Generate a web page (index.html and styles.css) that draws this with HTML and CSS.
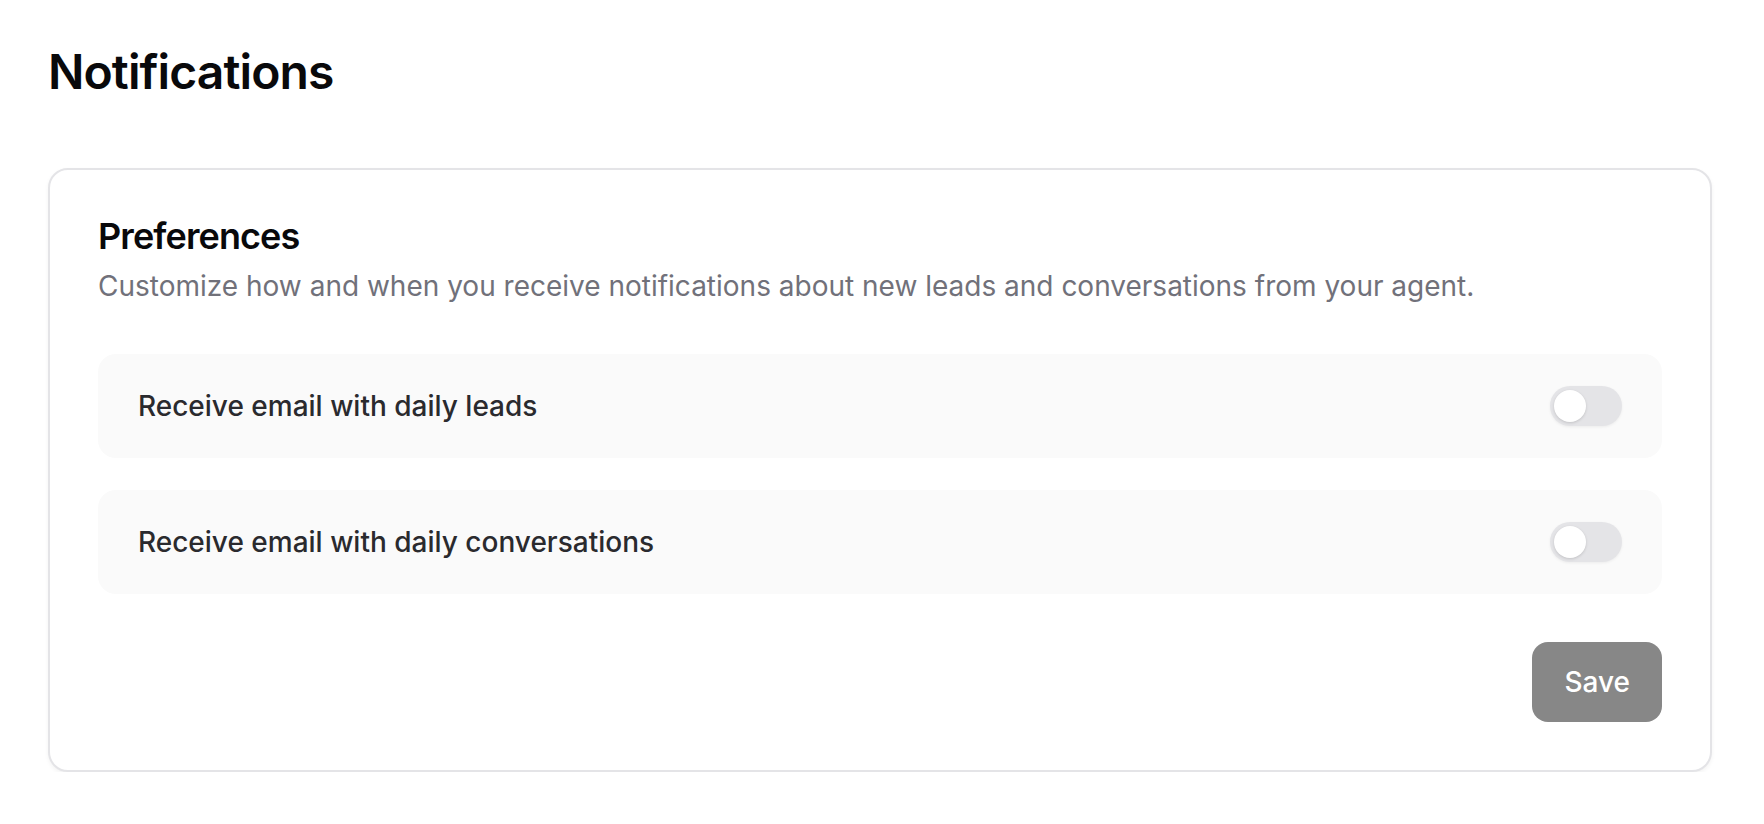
FILE: index.html
```html
<!DOCTYPE html>
<html lang="en">
<head>
<meta charset="utf-8">
<title>Notifications</title>
<link rel="stylesheet" href="styles.css">
</head>
<body>
<main class="page">
  <h1 class="title">Notifications</h1>
  <section class="card">
    <header class="card-header">
      <h2 class="card-title">Preferences</h2>
      <p class="card-desc">Customize how and when you receive notifications about new leads and conversations from your agent.</p>
    </header>
    <div class="list">
      <div class="row">
        <span class="label">Receive email with daily leads</span>
        <button class="switch" type="button" role="switch" aria-checked="false"><span class="thumb"></span></button>
      </div>
      <div class="row">
        <span class="label">Receive email with daily conversations</span>
        <button class="switch" type="button" role="switch" aria-checked="false"><span class="thumb"></span></button>
      </div>
    </div>
    <div class="actions">
      <button class="btn" type="button">Save</button>
    </div>
  </section>
</main>
</body>
</html>
```

FILE: styles.css
```css
* { box-sizing: border-box; }

html, body {
  margin: 0;
  background: #ffffff;
  font-family: Inter, "Noto Sans", "Liberation Sans", sans-serif;
  color: #09090b;
}

.page {
  padding: 40px 52px 0 48px;
}

.title {
  margin: 0 0 64px;
  font-size: 48px;
  line-height: 64px;
  font-weight: 600;
  letter-spacing: -0.9px;
  color: #09090b;
}

.card {
  border: 2px solid #e4e4e7;
  border-radius: 20px;
  padding: 48px;
  background: #ffffff;
  box-shadow: 0 2px 4px rgba(0, 0, 0, 0.05);
}

.card-header {
  display: flex;
  flex-direction: column;
  gap: 12px;
}

.card-title {
  margin: 0;
  font-size: 36px;
  line-height: 36px;
  font-weight: 600;
  letter-spacing: -0.9px;
  color: #09090b;
}

.card-desc {
  margin: 0;
  font-size: 28px;
  line-height: 40px;
  color: #71717a;
}

.list {
  margin-top: 48px;
  display: flex;
  flex-direction: column;
  gap: 32px;
}

.row {
  display: flex;
  align-items: center;
  justify-content: space-between;
  padding: 32px 40px;
  background: #fafafa;
  border-radius: 18px;
}

.label {
  font-size: 28px;
  line-height: 40px;
  font-weight: 500;
  color: #2a2a2e;
}

.switch {
  position: relative;
  width: 72px;
  height: 40px;
  padding: 0;
  border: none;
  border-radius: 20px;
  background: #e4e4e7;
  box-shadow: 0 1px 3px rgba(0, 0, 0, 0.06);
  cursor: pointer;
}

.thumb {
  position: absolute;
  top: 4px;
  left: 4px;
  width: 32px;
  height: 32px;
  border-radius: 50%;
  background: #ffffff;
  box-shadow: 0 1px 3px rgba(0, 0, 0, 0.15);
}

.actions {
  margin-top: 48px;
  display: flex;
  justify-content: flex-end;
}

.btn {
  height: 80px;
  padding: 0 32px;
  border: none;
  border-radius: 16px;
  background: #878787;
  color: #ffffff;
  font-family: inherit;
  font-size: 28px;
  font-weight: 500;
  cursor: pointer;
}
```
